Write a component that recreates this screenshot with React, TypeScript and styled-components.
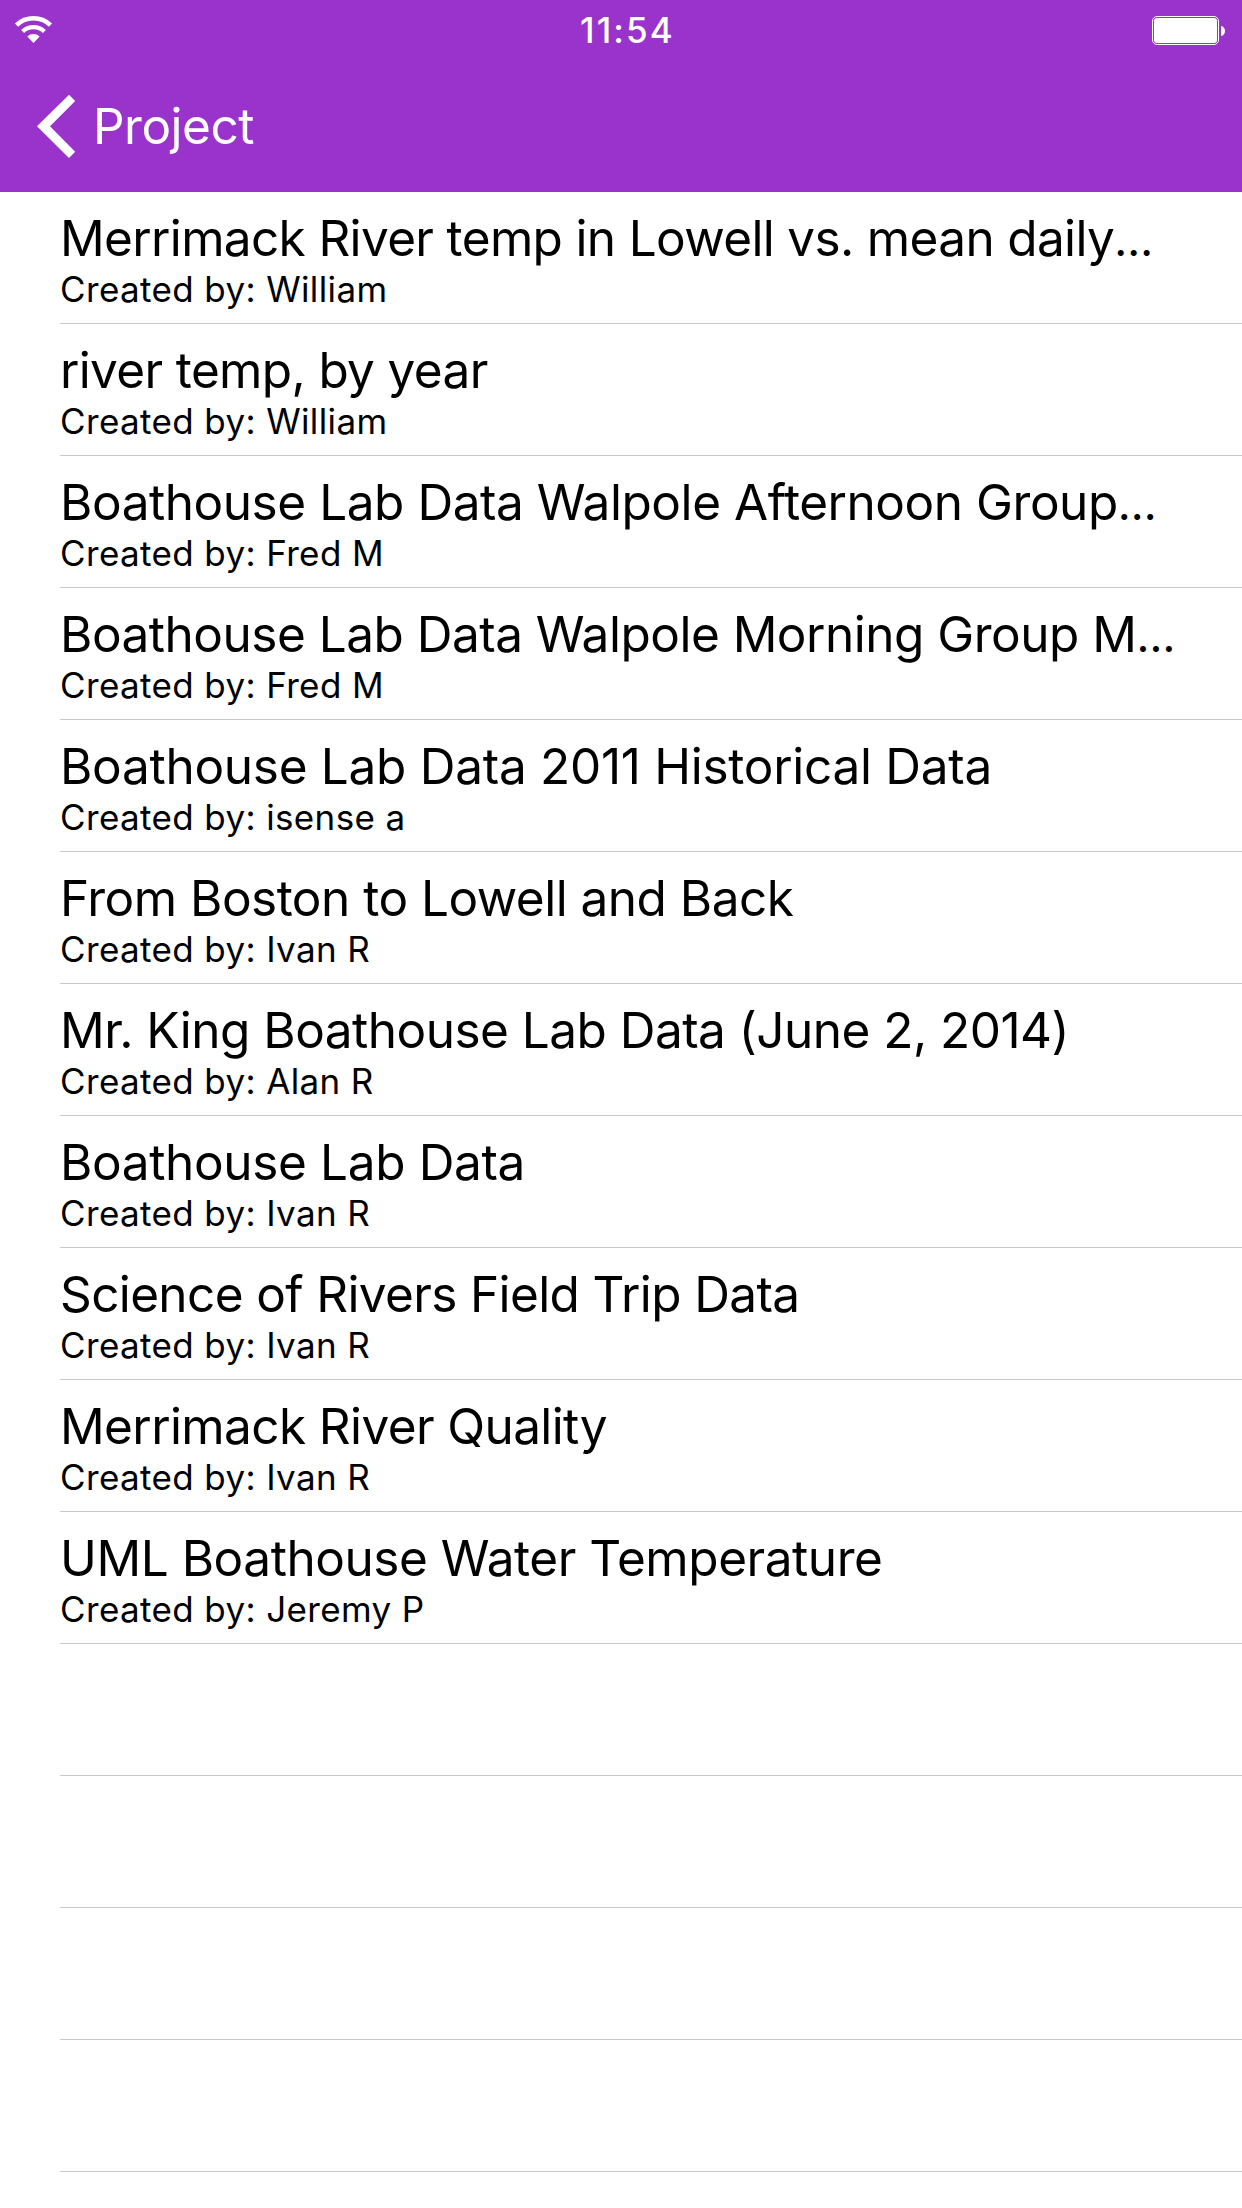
import React from "react";
import styled, { createGlobalStyle } from "styled-components";

const Global = createGlobalStyle`
  * { box-sizing: border-box; }
  body { margin: 0; background: #fff; }
`;

const Screen = styled.div`
  width: 1242px;
  height: 2208px;
  overflow: hidden;
  background: #fff;
  color: #000;
  font-family: Inter, "Liberation Sans", sans-serif;
`;

const Header = styled.header`
  height: 192px;
  background: #9a33cc;
  color: #fff;
`;

const StatusBar = styled.div`
  height: 60px;
  display: grid;
  grid-template-columns: 1fr auto 1fr;
  align-items: center;
  padding: 0 16px 0 14px;
`;

const Clock = styled.span`
  padding-left: 15px;
  font-size: 35px;
  font-weight: 540;
  letter-spacing: 2.1px;
`;

const BatterySlot = styled.span`
  display: flex;
  justify-content: flex-end;
  padding-top: 1px;
`;

const NavBar = styled.nav`
  height: 132px;
  display: flex;
  align-items: center;
  gap: 17px;
  padding-left: 37px;
`;

const BackLabel = styled.span`
  font-size: 49.5px;
  line-height: 60px;
  letter-spacing: -0.5px;
`;

const List = styled.ul`
  list-style: none;
  margin: 0;
  padding: 0 0 0 60px;
`;

const Row = styled.li`
  height: 132px;
  padding-top: 16px;
  border-bottom: 1px solid #c8c7cc;
  white-space: nowrap;
`;

const Title = styled.div<{ $track: number }>`
  font-size: 49.5px;
  line-height: 60px;
  letter-spacing: ${(p) => p.$track}px;
`;

const Ellipsis = styled.span`
  font-size: 45px;
  line-height: 1;
`;

const Author = styled.div`
  font-size: 35px;
  line-height: 42px;
  letter-spacing: 0.37px;
`;

const projects = [
  { title: "Merrimack River temp in Lowell vs. mean daily", cut: true, author: "William", track: -0.65 },
  { title: "river temp, by year", author: "William", track: -0.64 },
  { title: "Boathouse Lab Data Walpole Afternoon Group", cut: true, author: "Fred M", track: -0.45 },
  { title: "Boathouse Lab Data Walpole Morning Group M", cut: true, author: "Fred M", track: -0.5 },
  { title: "Boathouse Lab Data 2011 Historical Data", author: "isense a", track: -0.28 },
  { title: "From Boston to Lowell and Back", author: "Ivan R", track: -0.51 },
  { title: "Mr. King Boathouse Lab Data (June 2, 2014)", author: "Alan R", track: -0.52 },
  { title: "Boathouse Lab Data", author: "Ivan R", track: -0.36 },
  { title: "Science of Rivers Field Trip Data", author: "Ivan R", track: -0.63 },
  { title: "Merrimack River Quality", author: "Ivan R", track: -0.61 },
  { title: "UML Boathouse Water Temperature", author: "Jeremy P", track: -0.45 },
];

export default function App() {
  return (
    <Screen>
      <Global />
      <Header>
        <StatusBar>
          <svg width="39" height="28" viewBox="0 0 39 28" fill="none" stroke="#fff">
            <path d="M2.500 9.100A24.700 24.700 0 0 1 36.500 9.100" strokeWidth="4.600" />
            <path d="M8.600 15.500A15.900 15.900 0 0 1 30.400 15.500" strokeWidth="4.300" />
            <path d="M19.500 27L13.300 20.500A9 9 0 0 1 25.700 20.500z" fill="#fff" stroke="none" />
          </svg>
          <Clock>11:54</Clock>
          <BatterySlot>
            <svg width="74" height="29" viewBox="0 0 74 29">
              <rect x="0.500" y="0.500" width="66" height="28" rx="4.500" fill="none" stroke="#fff" />
              <rect x="2" y="2" width="63" height="25" rx="3" fill="#fff" />
              <path d="M69 10c5.300 0.500 5.300 9.500 0 10z" fill="#fff" />
            </svg>
          </BatterySlot>
        </StatusBar>
        <NavBar>
          <svg width="39" height="64" viewBox="0 0 39 64" fill="#fff">
            <path d="M32 0.800L38.200 7L13 32.300L38.200 57.800L32 64L0 32.300z" />
          </svg>
          <BackLabel>Project</BackLabel>
        </NavBar>
      </Header>
      <List>
        {projects.map((p) => (
          <Row key={p.title}>
            <Title $track={p.track}>
              {p.title}
              {p.cut && <Ellipsis>…</Ellipsis>}
            </Title>
            <Author>Created by: {p.author}</Author>
          </Row>
        ))}
        {[0, 1, 2, 3].map((n) => (
          <Row key={n} />
        ))}
      </List>
    </Screen>
  );
}
